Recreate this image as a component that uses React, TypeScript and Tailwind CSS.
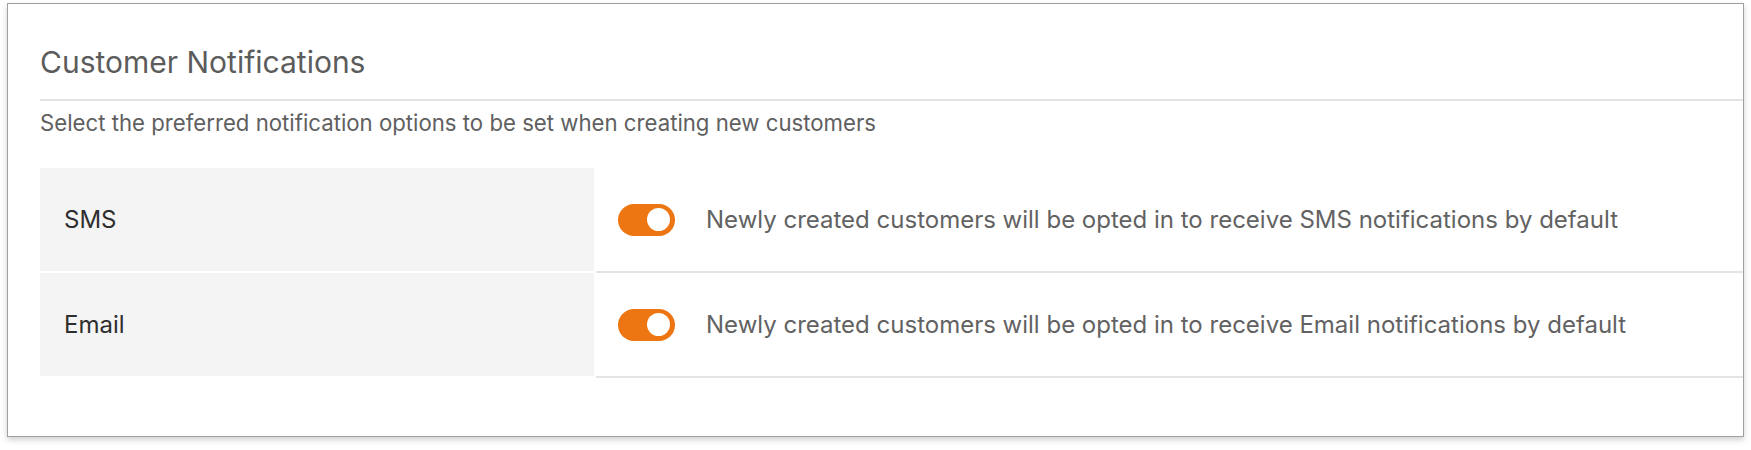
import React from 'react';

interface OptionRowProps {
  label: string;
  channel: string;
}

const Toggle: React.FC = () => (
  <div className="flex h-[32px] w-[57px] shrink-0 items-center justify-end rounded-full bg-[#ed7612] pr-[5px]">
    <div className="h-[23px] w-[23px] rounded-full bg-white" />
  </div>
);

const OptionRow: React.FC<OptionRowProps> = ({ label, channel }) => (
  <div className="flex h-[105px]">
    {/* label cell */}
    <div className="flex w-[554px] shrink-0 items-center border-b-2 border-white bg-[#f4f4f4] pl-[24px] text-[24px] text-[#2e2e2e]">
      {label}
    </div>
    {/* toggle + description cell */}
    <div className="ml-[2px] flex flex-1 items-center gap-[31px] border-b-2 border-[#e4e4e4] pl-[22px]">
      <Toggle />
      <span className="text-[24px] text-[#626262]">
        Newly created customers will be opted in to receive {channel} notifications by default
      </span>
    </div>
  </div>
);

export default function App() {
  return (
    <div className="min-h-[450px] bg-white pt-[3px] font-['Inter',sans-serif]">
      <div className="ml-[7px] flex h-[434px] w-[1737px] flex-col border border-[#a0a0a0] bg-white pl-[32px] shadow-[0_3px_6px_rgba(0,0,0,0.18)]">
        <h2 className="mt-[40px] text-[30px] leading-[36px] font-normal text-[#5c5c5c]">Customer Notifications</h2>
        <div className="mt-[19px] h-[2px] bg-[#e3e3e3]" />
        <p className="mt-[9px] text-[22.2px] leading-[26px] text-[#606060]">
          Select the preferred notification options to be set when creating new customers
        </p>
        <div className="mt-[32px] flex flex-col">
          <OptionRow label="SMS" channel="SMS" />
          <OptionRow label="Email" channel="Email" />
        </div>
      </div>
    </div>
  );
}
